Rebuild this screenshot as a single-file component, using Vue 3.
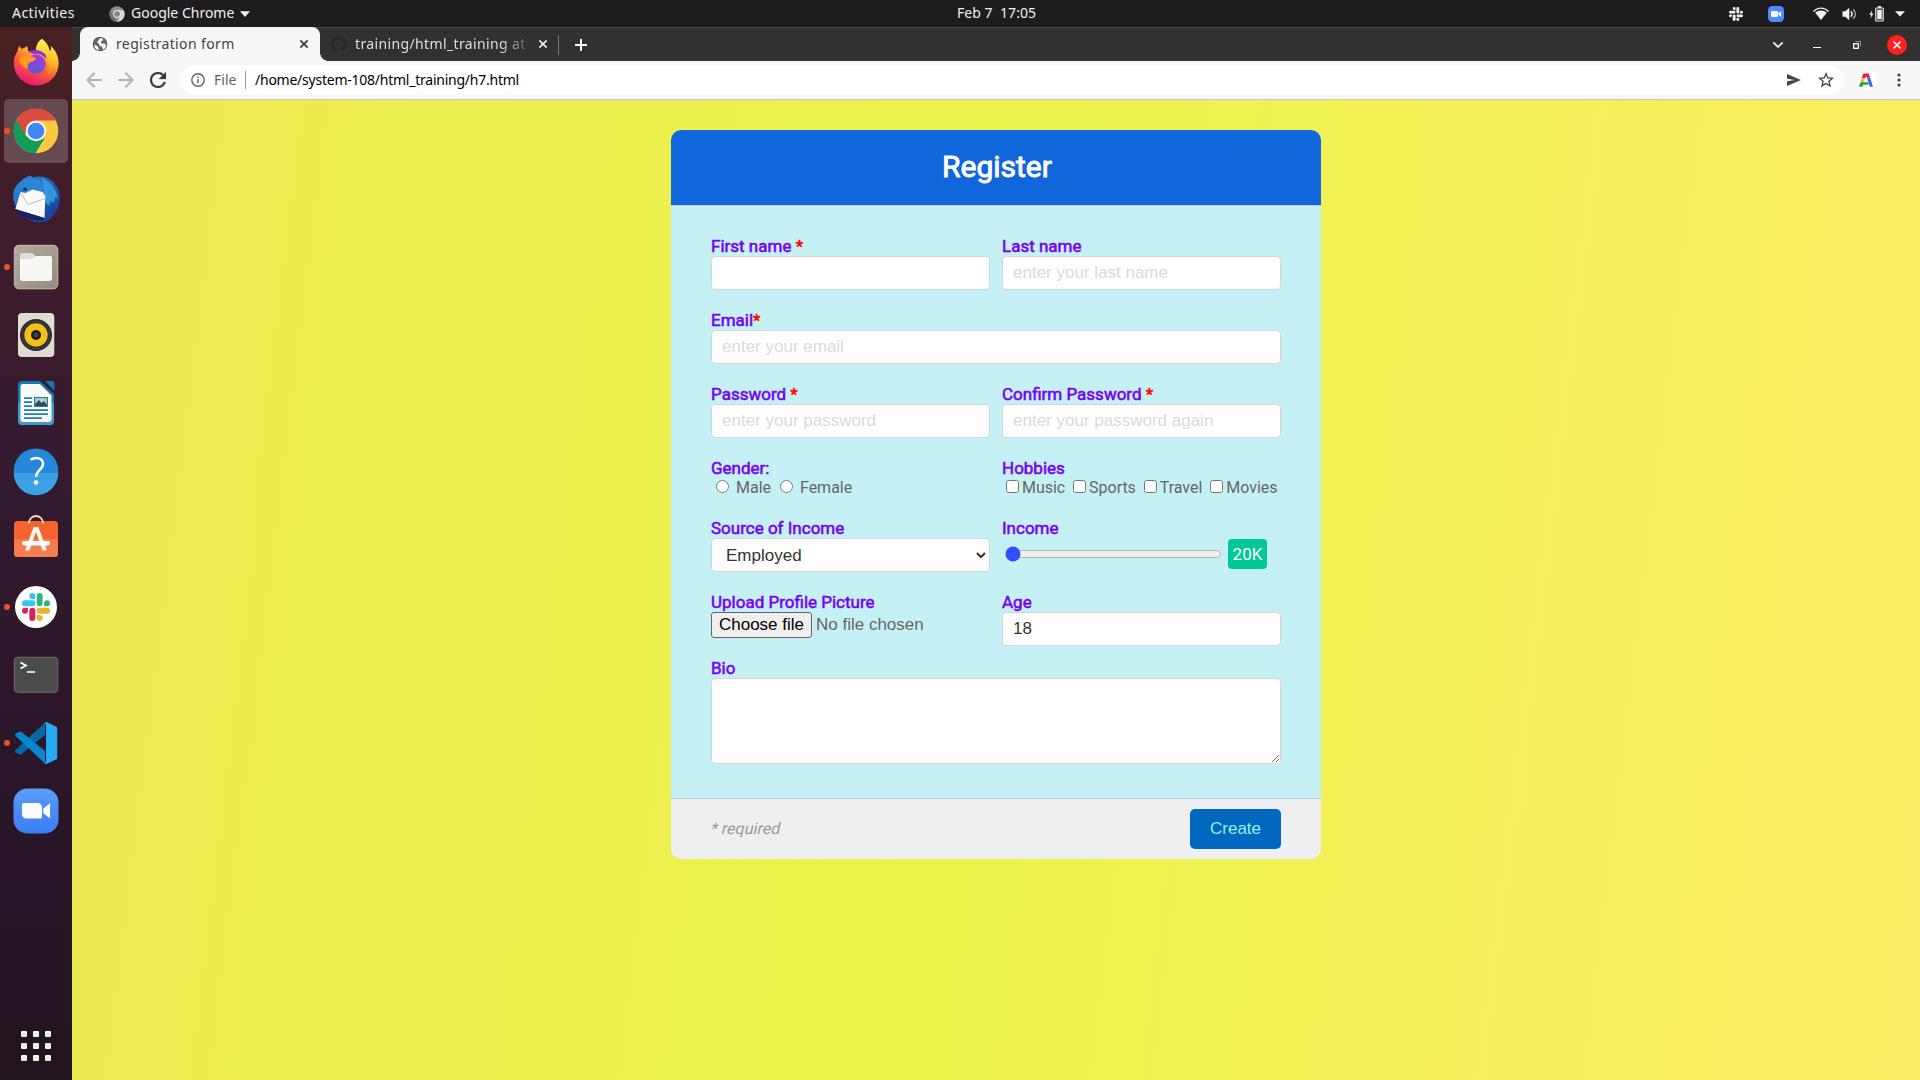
<script setup>
import { ref } from 'vue'

const slackParts = [
  { c: '#e01e5a', d: 'M5.042 15.165a2.528 2.528 0 0 1-2.52 2.523A2.528 2.528 0 0 1 0 15.165a2.527 2.527 0 0 1 2.522-2.52h2.52v2.52zM6.313 15.165a2.527 2.527 0 0 1 2.521-2.52 2.527 2.527 0 0 1 2.521 2.52v6.313A2.528 2.528 0 0 1 8.834 24a2.528 2.528 0 0 1-2.521-2.522v-6.313z' },
  { c: '#36c5f0', d: 'M8.834 5.042a2.528 2.528 0 0 1-2.521-2.52A2.528 2.528 0 0 1 8.834 0a2.528 2.528 0 0 1 2.521 2.522v2.52H8.834zM8.834 6.313a2.528 2.528 0 0 1 2.521 2.521 2.528 2.528 0 0 1-2.521 2.521H2.522A2.528 2.528 0 0 1 0 8.834a2.528 2.528 0 0 1 2.522-2.521h6.312z' },
  { c: '#2eb67d', d: 'M18.956 8.834a2.528 2.528 0 0 1 2.522-2.521A2.528 2.528 0 0 1 24 8.834a2.528 2.528 0 0 1-2.522 2.521h-2.522V8.834zM17.688 8.834a2.528 2.528 0 0 1-2.523 2.521 2.527 2.527 0 0 1-2.52-2.521V2.522A2.527 2.527 0 0 1 15.165 0a2.528 2.528 0 0 1 2.523 2.522v6.312z' },
  { c: '#ecb22e', d: 'M15.165 18.956a2.528 2.528 0 0 1 2.523 2.522A2.528 2.528 0 0 1 15.165 24a2.527 2.527 0 0 1-2.52-2.522v-2.522h2.52zM15.165 17.688a2.527 2.527 0 0 1-2.52-2.523 2.526 2.526 0 0 1 2.52-2.52h6.313A2.527 2.527 0 0 1 24 15.165a2.528 2.528 0 0 1-2.522 2.523h-6.313z' }
]
const hobbies = ['Music', 'Sports', 'Travel', 'Movies']
const income = ref(20)
const age = ref('18')
</script>

<template>
  <div class="desktop">
    <header class="topbar">
      <div class="top-left">
        <span class="activities">Activities</span>
        <svg class="app-ico" width="16" height="16" viewBox="0 0 16 16">
          <circle cx="8" cy="8" r="7.7" fill="#8c8c8c" />
          <path d="M8 4.3h6.7A7.7 7.7 0 0 1 8 15.7L11.2 10z" fill="#d6d6d6" />
          <path d="M1.4 4.2L4.8 10 8 15.7A7.7 7.7 0 0 1 1.4 4.2z" fill="#6d6d6d" />
          <circle cx="8" cy="8" r="3.9" fill="#e8e8e8" /><circle cx="8" cy="8" r="2.9" fill="#858585" />
        </svg>
        <span class="app-name">Google Chrome</span>
        <svg class="caret" width="10" height="6" viewBox="0 0 10 6"><path d="M0 .3h10L5 6z" fill="#f2f2f2" /></svg>
      </div>
      <div class="clock">Feb 7&nbsp; 17:05</div>
      <div class="tray">
        <svg class="t-slack" width="14" height="14" viewBox="0 0 24 24"><path v-for="p in slackParts" :key="p.c" :d="p.d" fill="#f0f0f0" /></svg>
        <svg class="t-zoom" width="16" height="16" viewBox="0 0 16 16"><rect width="16" height="16" rx="4.5" fill="#4a8cff" /><rect x="3" y="5" width="7" height="6" rx="1.2" fill="#fff" /><path d="M10.5 7l2.6-1.7v5.4L10.500 9z" fill="#fff" /></svg>
        <svg class="t-wifi" width="16" height="14" viewBox="0 0 16 14"><path d="M.4 4.500C4.800 0 11.200 0 15.600 4.500" fill="none" stroke="#eee" stroke-width="1.300" /><path d="M2.200 5.700c3.400-3 8.200-3 11.600 0L8 13z" fill="#f2f2f2" /></svg>
        <svg class="t-vol" width="16" height="14" viewBox="0 0 16 14"><path d="M.5 4.300h2.800L7.300 .8v12.400L3.300 9.700H.5z" fill="#f2f2f2" /><path d="M9 4.300q2.200 2.700 0 5.400" fill="none" stroke="#f2f2f2" stroke-width="1.400" /><path d="M11.200 2.200q4.400 4.800 0 9.600" fill="none" stroke="#aaa" stroke-width="1.300" /></svg>
        <svg class="t-bat" width="15" height="16" viewBox="0 0 15 16"><path d="M3.200 4L.2 8.700h2L1.500 12.500l3-5h-2z" fill="#f2f2f2" /><rect x="6.800" y="2" width="7.400" height="13" rx=".8" fill="none" stroke="#f2f2f2" stroke-width="1.200" /><path d="M8.200 3.800h4.600v9.500H8.200zM9 0h3v2H9z" fill="#f2f2f2" /></svg>
        <svg class="t-caret" width="10" height="6" viewBox="0 0 10 6"><path d="M0 .3h10L5 5.600z" fill="#f2f2f2" /></svg>
      </div>
    </header>

    <div class="below">
      <nav class="dock">
        <div class="slot">
          <svg width="64" height="64" viewBox="0 0 64 64">
            <defs>
              <linearGradient id="ffA" x1=".8" y1="0" x2=".3" y2="1"><stop offset="0" stop-color="#fff44f" /><stop offset=".35" stop-color="#ffb52c" /><stop offset=".62" stop-color="#ff5a36" /><stop offset="1" stop-color="#e3127c" /></linearGradient>
              <linearGradient id="ffB" x1=".5" y1="0" x2=".4" y2="1"><stop offset="0" stop-color="#b833e1" /><stop offset="1" stop-color="#4e5fd0" /></linearGradient>
              <linearGradient id="ffC" x1="0" y1="0" x2="0" y2="1"><stop offset="0" stop-color="#fff44f" /><stop offset="1" stop-color="#ff980e" stop-opacity=".3" /></linearGradient>
            </defs>
            <path d="M38 8c5 4 7 8 7.500 12 2-.5 2-3 1.500-5 5 5 7.700 11 7.700 17A22.500 22.500 0 0 1 32 54.500 22.500 22.500 0 0 1 9.700 32c0-5 2-9.500 4-12 0-2 .5-4 2-5 .5 1.500 1.500 2.500 2.300 3 1.500-1 3.500-1.500 5-3 1 2 1 4 1 5h8c0-5 2-10 6-12z" fill="url(#ffA)" />
            <path d="M38 8c5 4 7 8 7.500 12 2-.5 2-3 1.500-5 5 5 7.500 11 7 17-1 7-6 12-12 14 4-6 4-13 1-18-3-5-9-6-11-8 0-5 2-10 6-12z" fill="url(#ffC)" />
            <circle cx="32" cy="33" r="9.700" fill="url(#ffB)" />
            <path d="M15 27c6-4 13-2 17 0-1 4-5 3-7 5-3 3 0 5-2 6-4-2-8-6-8-11z" fill="#ff9a1f" />
            <path d="M24 21c5-3 12-3 17 2 2 3 1 5 1 5-3-4-7-6-12-5z" fill="#8f35d8" />
          </svg>
        </div>
        <div class="slot active"><i class="run"></i>
          <svg width="64" height="64" viewBox="0 0 64 64">
            <circle cx="32" cy="32" r="22.300" fill="#fdc93e" />
            <path d="M12.600 21A22.300 22.300 0 0 1 51.500 21.500H32a10.500 10.500 0 0 0-9.300 5.700L21 36z" fill="#dd4b3e" />
            <path d="M12.600 21A22.300 22.300 0 0 0 31.500 54.300L41 38.500 32 42.500 22.500 37.500z" fill="#119d58" />
            <circle cx="32" cy="32" r="10.200" fill="#f4f4f4" /><circle cx="32" cy="32" r="8.300" fill="#4285f4" />
          </svg>
        </div>
        <div class="slot">
          <svg width="64" height="64" viewBox="0 0 64 64">
            <defs><linearGradient id="tb" x1="0" y1="0" x2="1" y2="1"><stop offset="0" stop-color="#2f8fdc" /><stop offset=".5" stop-color="#1d63bb" /><stop offset="1" stop-color="#1a2f8a" /></linearGradient></defs>
            <path d="M26 8.500l3 2C45 6 56 19 56 31c0 11-7 20-15 24.500l-3-.5c-8 1-21-4-24-12C7 32 7 22 17 14c3-3 6-4 9-5.500z" fill="url(#tb)" />
            <path d="M16 19c4-7 14-10 21-5 6 4 7 11 5 17l-20-5z" fill="#2b86d2" />
            <path d="M37 11c9 3 16 11 17 21l-3-2-1 6-3-2-2 5-4-4c1-8 0-17-4-24z" fill="#3aa7e8" opacity=".75" />
            <path d="M11.300 42L16.500 25l5 1 7-3.500 10 2.500 2.800 4-.8 22z" fill="#fafafa" />
            <path d="M16.500 25.500L24 37.500l17.300-6" fill="none" stroke="#bbb" stroke-width="1" /><path d="M11 42l29.500 9-1 2.500C29 54 15 52 11 42z" fill="#1c1d63" />
            <circle cx="21" cy="22.300" r="1.800" fill="#12335f" />
          </svg>
        </div>
        <div class="slot"><i class="run"></i>
          <svg width="64" height="64" viewBox="0 0 64 64">
            <defs><linearGradient id="fl" x1="0" y1="0" x2="1" y2="1"><stop offset="0" stop-color="#b3ab9c" /><stop offset="1" stop-color="#958d7c" /></linearGradient></defs>
            <rect x="10.300" y="10.300" width="43.500" height="43.500" rx="4.500" fill="url(#fl)" stroke="#c4beb0" />
            <path d="M16 20q0-2 2-2h9q2 0 2.500 1l2 2.500v4H16z" fill="#e0dcd0" />
            <path d="M16 24h12l4-3h14q2 0 2 2v20q0 3-3 3H19q-3 0-3-3z" fill="#f9f8f6" />
          </svg>
        </div>
        <div class="slot">
          <svg width="64" height="64" viewBox="0 0 64 64">
            <rect x="14" y="10" width="36.300" height="44" rx="4" fill="#e0ddd1" />
            <circle cx="32" cy="32" r="16" fill="#2b2b2e" /><circle cx="32" cy="32" r="13.800" fill="none" stroke="#484850" />
            <circle cx="32" cy="32" r="11.700" fill="#f3c01c" /><circle cx="32" cy="32" r="5" fill="#1d1d1d" /><circle cx="32" cy="32" r="2.500" fill="#444" />
          </svg>
        </div>
        <div class="slot">
          <svg width="64" height="64" viewBox="0 0 64 64">
            <path d="M18 10h18l14 13v27q0 4-4 4H18q-4 0-4-4V14q0-4 4-4z" fill="#1779ab" />
            <path d="M14 32h36v18q0 4-4 4H18q-4 0-4-4z" fill="#3c9dca" />
            <path d="M19 13h17l11.500 11.500V48q0 3-3 3H19.500q-3 0-3-3V16q0-3 2.500-3z" fill="#fafafa" />
            <path d="M41 10h7q2.300 0 2.300 2.300V20z" fill="#1779ab" />
            <path d="M20 26.200h8v1.800h-8zm0 4h8V32h-8zm0 4h8V36h-8zm0 4h24V40H20zm0 4h24V44H20zm0 4h18V48H20z" fill="#1c7fb0" />
            <rect x="30" y="26" width="14" height="10" fill="#1c7fb0" /><rect x="31.200" y="27.200" width="11.600" height="7.600" fill="#a4d6ee" />
            <path d="M31.200 35v-2l3.500-4 3 3 2-2 3 3.500V35z" fill="#444" /><circle cx="41.500" cy="28.500" r="1.500" fill="#f6b825" />
          </svg>
        </div>
        <div class="slot">
          <svg width="64" height="64" viewBox="0 0 64 64">
            <circle cx="32" cy="31.700" r="22.300" fill="#2487da" /><path d="M9.700 34h44.600a22.300 22.300 0 0 1-44.600 0z" fill="#3da0e4" />
            <path d="M26.500 20.700c6-3.500 12.500-1.500 12.500 4 0 6-6.800 6.500-6.800 13" fill="none" stroke="#fff" stroke-width="2.500" /><circle cx="32" cy="43.500" r="2.300" fill="#fff" />
          </svg>
        </div>
        <div class="slot">
          <svg width="64" height="64" viewBox="0 0 64 64">
            <rect x="10" y="14" width="44" height="36" rx="3.500" fill="#f4622d" /><path d="M10 32h44v14.500q0 3.500-3.500 3.500h-37q-3.500 0-3.500-3.500z" fill="#f57c4e" />
            <path d="M25 16.500c0-10 14-10 14 0" fill="none" stroke="#f3dcb4" stroke-width="1.800" />
            <path d="M21 43.500L29.500 20h5L43 43.500h-4.500L32 25l-6.500 18.500z" fill="#fff4ec" /><rect x="18" y="34" width="28" height="4.600" rx="2.300" fill="#fff" />
          </svg>
        </div>
        <div class="slot"><i class="run"></i>
          <svg width="64" height="64" viewBox="0 0 64 64">
            <circle cx="32" cy="32" r="21" fill="#fff" /><g transform="translate(18 18) scale(1.167)"><path v-for="p in slackParts" :key="p.c" :d="p.d" :fill="p.c" /></g>
          </svg>
        </div>
        <div class="slot">
          <svg width="64" height="64" viewBox="0 0 64 64">
            <rect x="10.300" y="14.300" width="43.500" height="35" rx="3" fill="#4b4b4b" stroke="#6c6c6c" />
            <path d="M16.500 19.500l5.500 3-5.500 3" fill="none" stroke="#fff" stroke-width="1.800" /><path d="M23 29h8" stroke="#fff" stroke-width="1.600" />
          </svg>
        </div>
        <div class="slot"><i class="run"></i>
          <svg width="64" height="64" viewBox="0 0 64 64">
            <path d="M11.500 41.500q-1-1.200 0-2.400L41 11.500V24L17.500 43q-1.300 1-2.500 0z" fill="#0569a8" />
            <path d="M11.500 22.500q-1 1.200 0 2.400L41 52.500V40L17.500 21q-1.300-1-2.500 0z" fill="#0a86cf" />
            <path d="M42.500 11l10 4.700q.7.400.7 1.300v30q0 .9-.7 1.300l-10 4.700q-1.500 0-2.500-1.500 2 .5 2-1.500V14q0-2-2-1.500 1-1.500 2.500-1.500z" fill="#27a8f2" />
          </svg>
        </div>
        <div class="slot">
          <svg width="64" height="64" viewBox="0 0 64 64">
            <defs><linearGradient id="zm" x1="0" y1="0" x2="0" y2="1"><stop offset="0" stop-color="#5a9df9" /><stop offset="1" stop-color="#3b7bf6" /></linearGradient></defs>
            <rect x="9.500" y="9.500" width="45" height="45" rx="14" fill="url(#zm)" />
            <path d="M18 25.500q0-1.500 1.500-1.500H33q5 0 5 5v9q0 1.500-1.500 1.500H23q-5 0-5-5z" fill="#fff" /><path d="M39.300 29.500l6.200-4.800q.6-.4.600.4v13.500q0 .8-.6.400l-6.200-4.800z" fill="#fff" />
          </svg>
        </div>
        <div class="apps"><b v-for="n in 9" :key="n"></b></div>
      </nav>

      <main class="browser">
        <div class="tabs">
          <div class="tab on">
            <svg width="16" height="16" viewBox="0 0 16 16"><circle cx="8" cy="8" r="7.300" fill="#5f6368" /><path d="M2.500 8.500l3.800 2.300v1.600l1.500 1.800c-3 .2-5.800-2.500-5.300-5.700zM8 2l3.200.8-.5 1.700-2 1.500.8 1.500h3l1.600 1.500c-.3 2.500-1.500 3.800-3 4.600L10 11 7.500 9.500 6.700 7.500 5 6.500l1.200-2z" fill="#f7f7f7" /></svg>
            <span class="tab-title t1">registration form</span>
            <svg class="x" width="8" height="8" viewBox="0 0 8 8"><path d="M.4.4l7.200 7.200M7.600.4L.4 7.600" stroke="#333" stroke-width="1.600" /></svg>
          </div>
          <div class="tab off">
            <svg width="16" height="16" viewBox="0 0 16 16"><path d="M8 0C3.580 0 0 3.580 0 8c0 3.540 2.290 6.530 5.470 7.590.4.070.550-.170.550-.380 0-.190-.010-.820-.010-1.490-2.010.370-2.530-.490-2.690-.940-.090-.230-.480-.940-.820-1.130-.280-.150-.680-.520-.010-.530.630-.010 1.080.580 1.230.820.720 1.210 1.870.870 2.330.660.070-.520.280-.870.510-1.070-1.780-.200-3.640-.890-3.640-3.950 0-.870.310-1.590.820-2.150-.080-.200-.360-1.020.080-2.120 0 0 .670-.210 2.200.820.640-.180 1.320-.270 2-.270s1.360.090 2 .270c1.530-1.040 2.200-.820 2.200-.820.440 1.100.160 1.920.080 2.120.510.560.820 1.270.820 2.150 0 3.070-1.870 3.750-3.650 3.950.290.250.540.730.540 1.480 0 1.070-.010 1.930-.010 2.200 0 .210.150.460.550.380A8.010 8.010 0 0 0 16 8c0-4.420-3.580-8-8-8z" fill="#24292f" /></svg>
            <span class="tab-title t2">training/html_training at</span>
            <svg class="x" width="8" height="8" viewBox="0 0 8 8"><path d="M.4.4l7.200 7.200M7.600.4L.4 7.600" stroke="#eee" stroke-width="1.600" /></svg>
          </div>
          <i class="sep"></i>
          <svg class="plus" width="12" height="12" viewBox="0 0 12 12"><path d="M6 0v12M0 6h12" stroke="#fff" stroke-width="1.900" /></svg>
          <div class="win">
            <svg class="w1" width="12" height="8" viewBox="0 0 12 8"><path d="M1.300 1.300L6 6l4.700-4.700" fill="none" stroke="#e8e8e8" stroke-width="1.900" /></svg>
            <i class="min"></i>
            <svg class="w3" width="8" height="8" viewBox="0 0 8 8"><path d="M2.500.5h5v5" fill="none" stroke="#999" /><rect x=".7" y="2.700" width="4.600" height="4.600" fill="none" stroke="#fff" stroke-width="1.300" /></svg>
            <svg class="w4" width="20" height="20" viewBox="0 0 20 20"><circle cx="10" cy="10" r="10" fill="#ff2020" /><path d="M6.500 6.500l7 7M13.500 6.500l-7 7" stroke="#fff" stroke-width="1.600" /></svg>
          </div>
        </div>
        <div class="toolbar">
          <svg width="16" height="16" viewBox="4 4 16 16"><path d="M20 11H7.830l5.590-5.590L12 4l-8 8 8 8 1.410-1.410L7.830 13H20v-2z" fill="#b4b4b4" /></svg>
          <svg class="fwd" width="16" height="16" viewBox="4 4 16 16"><path d="M12 4l-1.410 1.410L16.170 11H4v2h12.170l-5.580 5.590L12 20l8-8z" fill="#b4b4b4" /></svg>
          <svg class="rel" width="16" height="16" viewBox="4 4 16 16"><path d="M17.650 6.350A7.958 7.958 0 0 0 12 4c-4.420 0-7.990 3.580-7.990 8s3.570 8 7.990 8c3.730 0 6.840-2.550 7.730-6h-2.080A5.990 5.990 0 0 1 12 18c-3.310 0-6-2.690-6-6s2.690-6 6-6c1.660 0 3.140.690 4.220 1.780L13 11h7V4l-2.350 2.350z" fill="#3a3a3a" stroke="#3a3a3a" stroke-width=".3" /></svg>
          <div class="omni">
            <svg width="14" height="14" viewBox="0 0 14 14"><circle cx="7" cy="7" r="6.200" fill="none" stroke="#5f6368" stroke-width="1.400" /><path d="M6.250 6h1.500v4.300h-1.500zM6.250 3.500h1.500V5h-1.500z" fill="#5f6368" /></svg>
            <span class="file">File</span><i class="osep"></i><span class="url">/home/system-108/html_training/h7.html</span>
            <svg class="send" width="14" height="12" viewBox="0 0 14 12"><path d="M0 0l14 6L0 12V7.300L8 6 0 4.700z" fill="#444" /></svg>
            <svg class="star" width="16" height="16" viewBox="2 2 20 20"><path d="M22 9.240l-7.190-.620L12 2 9.190 8.630 2 9.240l5.460 4.730L5.820 21 12 17.270 18.180 21l-1.630-7.030L22 9.240zM12 15.400l-3.760 2.270 1-4.280-3.320-2.880 4.380-.380L12 6.100l1.710 4.040 4.380.380-3.320 2.880 1 4.280L12 15.400z" fill="#444" /></svg>
          </div>
          <svg class="ava" width="22" height="22" viewBox="0 0 22 22"><circle cx="11" cy="11" r="11" fill="#fff" /><path d="M8.300 4.500h5.400l1.400 4.200h-3.200L11 7.200 10.100 9.300H6.800z" fill="#f5173f" /><path d="M6.800 9.300h3.300L8.300 13.500H5.400z" fill="#fcb316" /><path d="M5.400 13.300h8v2.500H8.200l-.7 1.900H4z" fill="#1faa4a" /><path d="M15.100 8.700h-3.200l3 9H18z" fill="#3367f0" /></svg>
          <svg class="dots" width="4" height="14" viewBox="0 0 4 14"><circle cx="2" cy="2" r="1.600" fill="#444" /><circle cx="2" cy="7" r="1.600" fill="#444" /><circle cx="2" cy="12" r="1.600" fill="#444" /></svg>
        </div>

        <section class="page">
          <form class="card" @submit.prevent>
            <h1>Register</h1>
            <div class="body">
              <div class="row">
                <div class="col"><label>First name <em>*</em></label><input class="field" type="text"></div>
                <div class="col"><label>Last name</label><input class="field" type="text" placeholder="enter your last name"></div>
              </div>
              <div class="row">
                <div class="col"><label>Email<em>*</em></label><input class="field" type="text" placeholder="enter your email"></div>
              </div>
              <div class="row">
                <div class="col"><label>Password <em>*</em></label><input class="field" type="password" placeholder="enter your password"></div>
                <div class="col"><label>Confirm Password <em>*</em></label><input class="field" type="password" placeholder="enter your password again"></div>
              </div>
              <div class="row">
                <div class="col"><label>Gender:</label>
                  <div class="opts"><input type="radio" name="g"> Male <input type="radio" name="g"> Female</div>
                </div>
                <div class="col"><label>Hobbies</label>
                  <div class="opts boxes"><template v-for="h in hobbies" :key="h"><input type="checkbox">{{ h + ' ' }}</template></div>
                </div>
              </div>
              <div class="row">
                <div class="col"><label>Source of Income</label><select class="field"><option>Employed</option></select></div>
                <div class="col"><label>Income</label>
                  <div class="slider"><input v-model="income" type="range" min="20" max="100"><span class="badge">{{ income }}K</span></div>
                </div>
              </div>
              <div class="row tight">
                <div class="col"><label>Upload Profile Picture</label>
                  <div class="upload"><button type="button" class="choose">Choose file</button><span>No file chosen</span></div>
                </div>
                <div class="col"><label>Age</label><input v-model="age" class="field" type="text"></div>
              </div>
              <div class="col"><label>Bio</label><textarea></textarea></div>
            </div>
            <footer><span class="req">* required</span><button class="create" type="submit">Create</button></footer>
          </form>
        </section>
      </main>
    </div>
  </div>
</template>

<style>
html, body { margin: 0; overflow: hidden; background: #1d1d1d; }
</style>

<style scoped>
* { box-sizing: border-box; }
svg { display: block; flex: none; }
.desktop { width: 1920px; height: 1080px; display: flex; flex-direction: column; overflow: hidden; font-family: "Noto Sans", sans-serif; font-size: 14px; }
.topbar { height: 27px; flex: none; background: #1d1d1d; color: #f0f0f0; display: grid; grid-template-columns: 957px 1fr 200px; align-items: center; line-height: 24px; white-space: pre; }
.top-left { display: flex; align-items: center; padding-left: 12px; }
.top-left span, .clock { padding-bottom: 2px; }
.activities { width: 97px; letter-spacing: .45px; }
.app-name { margin-left: 6px; width: 105px; }
.caret { margin-left: 4px; }
.clock { letter-spacing: .05px; }
.tray { display: flex; align-items: center; }
.t-slack { margin-left: 9px; }
.t-zoom { margin-left: 25px; }
.t-wifi { margin-left: 29px; }
.t-vol { margin-left: 13px; }
.t-bat { margin-left: 11px; }
.t-caret { margin-left: 11px; }
.below { flex: 1; display: flex; min-height: 0; }
.dock { width: 72px; background: linear-gradient(#4a2123 0, #3e1c2b 200px, #321a2f 480px, #281528 800px, #21151f 1053px); padding: 4px 4px 0; display: flex; flex-direction: column; gap: 4px; }
.slot { width: 64px; height: 64px; flex: none; position: relative; border-radius: 5px; }
.slot.active { background: #654a50; }
.run { position: absolute; left: 0; top: 29px; width: 6px; height: 6px; border-radius: 50%; background: #e95420; }
.apps { margin: auto 0 19px 17px; display: grid; grid-template-columns: repeat(3, 6px); gap: 6px; }
.apps b { width: 6px; height: 6px; background: #f0f0ee; border-radius: 1px; }
.browser { flex: 1; display: flex; flex-direction: column; min-width: 0; }
.tabs { height: 34px; background: #33312f; border-top: 1px solid #484644; display: flex; align-items: center; flex: none; }
.tab { display: flex; align-items: center; height: 34px; margin-top: -1px; }
.tab.on { width: 240px; margin-left: 8px; background: #f7f7f7; border-radius: 8px 8px 0 0; padding-left: 12px; position: relative; color: #444; }
.tab.on::before, .tab.on::after { content: ""; position: absolute; bottom: 0; width: 8px; height: 8px; }
.tab.on::before { left: -8px; background: radial-gradient(circle at 0 0, transparent 7.500px, #f7f7f7 8px); }
.tab.on::after { right: -8px; background: radial-gradient(circle at 100% 0, transparent 7.500px, #f7f7f7 8px); }
.tab-title { margin-left: 8px; white-space: nowrap; overflow: hidden; padding-bottom: 2px; letter-spacing: .37px; }
.t1 { width: 184px; }
.tab.off { width: 238px; padding-left: 11px; color: #dedede; }
.t2 { width: 173px; margin-right: 11px; -webkit-mask-image: linear-gradient(90deg, #000 145px, rgba(0, 0, 0, .2)); mask-image: linear-gradient(90deg, #000 145px, rgba(0, 0, 0, .2)); }
.sep { width: 1px; height: 20px; background: #777; }
.plus { margin-left: 16px; }
.win { margin-left: auto; display: flex; align-items: center; padding-right: 13px; }
.min { width: 8px; height: 1px; background: #fff; margin: 5px 0 0 29px; }
.w3 { margin-left: 32px; }
.w4 { margin-left: 26px; }
.toolbar { height: 39px; flex: none; background: #f7f7f7; border-bottom: 1px solid #c5c5c5; display: flex; align-items: center; padding-left: 14px; }
.fwd { margin-left: 16px; }
.rel { margin-left: 16px; }
.omni { margin-left: 14px; width: 1664px; height: 30px; border-radius: 15px; background: #fff; display: flex; align-items: center; padding: 0 10px 0 11px; color: #000; }
.file { margin-left: 9px; width: 25px; color: #5f6368; padding-bottom: 2px; }
.url { letter-spacing: -.24px; padding-bottom: 2px; }
.osep { width: 1px; height: 18px; background: #999; margin: 0 9px 0 6px; }
.send { margin-left: auto; }
.star { margin-left: 17px; }
.ava { margin-left: 11px; }
.dots { margin-left: 20px; }
.page { flex: 1; min-height: 0; padding-top: 30px; background: linear-gradient(97deg, #edea54 0%, #ebf34b 47%, #fced66 100%); }
.card { width: 650px; margin-left: 599px; border-radius: 10px; overflow: hidden; background: #c6f1f4; font-family: Roboto, sans-serif; font-size: 16px; color: #666; }
h1 { margin: 0; height: 76px; padding-left: 2px; line-height: 74px; background: #1266db; border-bottom: 1px solid #c0c8d4; color: #fff; font-size: 30px; font-weight: 400; text-align: center; -webkit-text-stroke: .9px #fff; }
.body { padding: 31px 40px 34px; }
.row { display: flex; gap: 12px; margin-bottom: 21px; }
.row.tight { margin-bottom: 13px; }
.col { flex: 1; min-width: 0; display: flex; flex-direction: column; }
label { height: 19px; line-height: 19px; font-size: 17px; color: #7500f5; -webkit-text-stroke: .55px #7500f5; white-space: pre; }
label em { font-style: normal; color: #f00; -webkit-text-stroke: .55px #f00; }
.field { width: 100%; height: 34px; margin: 0; padding: 0 10px; border: 1px solid #d3d5d8; border-radius: 4px; background: #fff; font: 17px "Liberation Sans", Arial, sans-serif; color: #333; outline: 0; }
.field::placeholder { color: #dadada; }
select.field { padding: 0 0 0 10px; }
.opts { height: 20px; line-height: 20px; white-space: pre; }
.opts input { margin-top: 0; margin-bottom: 0; vertical-align: 0; }
.boxes { letter-spacing: -.03px; }
.slider { height: 34px; display: flex; align-items: flex-start; }
.slider input { width: 217px; height: 16px; margin: 8px 2px 0 3px; accent-color: #304ffe; }
.badge { width: 39px; height: 30px; margin: 1px 0 0 4px; line-height: 31px; font-size: 17px; text-align: center; border-radius: 4px; background: #00c896; color: #fff; }
.upload { display: flex; align-items: flex-start; font: 17px "Liberation Sans", Arial, sans-serif; }
.choose { width: 101px; height: 26px; padding: 0; border: 1px solid #666; border-radius: 3px; background: #efefef; color: #000; font: inherit; }
.upload span { margin-left: 4px; line-height: 25px; }
textarea { width: 100%; height: 86px; border: 1px solid #d3d5d8; border-radius: 4px; background: #fff; outline: 0; }
footer { height: 61px; padding: 0 40px; border-top: 1px solid #c6c8ce; background: #eeeff1; display: flex; align-items: center; justify-content: space-between; }
.req { color: #999; transform: skewX(-13deg); padding-bottom: 2px; }
.create { width: 91px; height: 40px; border: 0; border-radius: 5px; background: #0168bf; color: #99f0ee; font: 17px "Liberation Sans", Arial, sans-serif; }
</style>
